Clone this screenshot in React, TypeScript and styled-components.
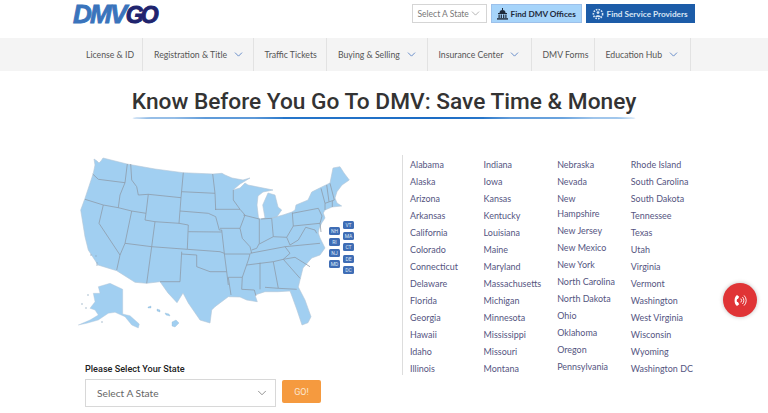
import styled, { createGlobalStyle } from "styled-components";
import { ChevronDown } from "lucide-react";

const GlobalStyle = createGlobalStyle`
  html, body {
    margin: 0;
    padding: 0;
    height: 413px;
    overflow: hidden;
    background: #fff;
    font-family: "Lato", "Liberation Sans", sans-serif;
  }
  * { box-sizing: border-box; }
`;

const Page = styled.div`
  position: relative;
  width: 768px;
  height: 413px;
  overflow: hidden;
`;

const TopBar = styled.header`
  height: 38px;
  padding: 4px 73px 0;
  display: flex;
  align-items: flex-start;
`;

const Logo = styled.div`
  font-family: "Liberation Sans", sans-serif;
  font-size: 26px;
  line-height: 21px;
  font-weight: 700;
  font-style: italic;
  letter-spacing: -1.7px;
  color: #3a74bc;
  -webkit-text-stroke: 0.9px currentColor;
  margin-right: auto;
`;

const LogoGo = styled.span`
  color: #20246e;
  font-size: 23px;
  letter-spacing: -2.8px;
`;

const TopSelect = styled.div`
  width: 75px;
  height: 19px;
  margin-right: 4px;
  padding: 0 4px 0 5px;
  display: flex;
  align-items: center;
  justify-content: space-between;
  border: 1px solid #d5d5d5;
  background: #fff;
  color: #777;
  font-size: 8.5px;
  white-space: nowrap;
  svg { flex-shrink: 0; }
`;

const TopButton = styled.div<{ $dark?: boolean }>`
  width: ${(p) => (p.$dark ? "109.5px" : "91px")};
  height: 19px;
  margin-left: ${(p) => (p.$dark ? "4px" : "0")};
  padding: 0 5px;
  display: flex;
  align-items: center;
  gap: 3px;
  font-size: 8.2px;
  font-weight: 700;
  white-space: nowrap;
  border: 1px solid ${(p) => (p.$dark ? "#1c5ca8" : "#9cc0ea")};
  background: ${(p) => (p.$dark ? "#1c5ca8" : "#a6d4fa")};
  color: ${(p) => (p.$dark ? "#d8e6f5" : "#1e2a3a")};
  svg { flex-shrink: 0; }
`;

const NavBar = styled.nav`
  height: 33px;
  background: #f4f4f4;
  padding-left: 75px;
  display: flex;
`;

const NavItem = styled.div<{ $width: number }>`
  width: ${(p) => p.$width}px;
  padding-left: 11px;
  display: flex;
  align-items: center;
  gap: 5px;
  border-right: 1px solid #e2e2e2;
  color: #555;
  font-size: 8.7px;
  white-space: nowrap;
  svg { color: #4a78c0; flex-shrink: 0; }
`;

const TitleRow = styled.div`
  display: flex;
  justify-content: center;
  padding-top: 15px;
`;

const Title = styled.h1`
  margin: 0;
  font-family: "Roboto", sans-serif;
  font-size: 22.7px;
  line-height: 31px;
  font-weight: 500;
  color: #333;
  white-space: nowrap;
  &::after {
    content: "";
    display: block;
    height: 2px;
    border-radius: 50%;
    background: linear-gradient(90deg, #2f7fd0, #1c6cc4 60%, #4a94dc);
  }
`;

const Main = styled.main`
  display: flex;
  padding-top: 36px;
`;

const LeftColumn = styled.section`
  width: 402px;
  padding-left: 78px;
`;

const MapWrap = styled.div`
  position: relative;
  width: 280px;
  height: 175px;
`;

const TagCluster = styled.div`
  position: absolute;
  left: 251px;
  top: 66px;
  display: flex;
  gap: 3px;
`;

const TagColumn = styled.div<{ $offset: number }>`
  display: flex;
  flex-direction: column;
  gap: 3.2px;
  padding-top: ${(p) => p.$offset}px;
`;

const Tag = styled.div`
  width: 11px;
  height: 8px;
  border-radius: 1.5px;
  background: #3f6db5;
  color: #dce8f6;
  font-family: "Roboto", sans-serif;
  font-size: 5px;
  line-height: 8px;
  text-align: center;
`;

const PickerLabel = styled.div`
  margin: 32px 0 0 7px;
  font-family: "Roboto", sans-serif;
  font-size: 9.1px;
  line-height: 14px;
  font-weight: 500;
  color: #222;
`;

const PickerRow = styled.div`
  display: flex;
  gap: 6px;
  margin: 3px 0 0 7px;
`;

const PickerSelect = styled.div`
  width: 191px;
  height: 28px;
  padding: 0 6px 0 11px;
  display: flex;
  align-items: center;
  justify-content: space-between;
  border: 1px solid #d8d8d8;
  color: #666;
  font-size: 10.2px;
`;

const GoButton = styled.div`
  width: 39px;
  height: 23px;
  margin-top: 1px;
  border-radius: 2px;
  background: #f59a3f;
  color: #fbe6d0;
  font-family: "Roboto", sans-serif;
  font-size: 9px;
  line-height: 24px;
  text-align: center;
`;

const StateList = styled.section`
  height: 220px;
  padding: 1px 0 0 7px;
  border-left: 1px solid #ddd;
  display: flex;
`;

const StateColumn = styled.ul<{ $narrow?: boolean }>`
  width: 73.6px;
  margin: 0;
  padding: 0 ${(p) => (p.$narrow ? "15px" : "0")} 0 0;
  list-style: none;
`;

const StateItem = styled.li`
  padding: 1px 0;
  color: #55557f;
  font-size: 8.95px;
  line-height: 15px;
`;

const CallButton = styled.div`
  position: absolute;
  left: 723px;
  top: 283px;
  width: 34px;
  height: 34px;
  border-radius: 50%;
  background: #e03436;
  box-shadow: 0 0 4px rgba(0, 0, 0, 0.25);
  display: flex;
  align-items: center;
  justify-content: center;
`;

const navItems = [
  { label: "License & ID", width: 68 },
  { label: "Registration & Title", width: 110.5, arrow: true },
  { label: "Traffic Tickets", width: 73.5 },
  { label: "Buying & Selling", width: 100.5, arrow: true },
  { label: "Insurance Center", width: 104, arrow: true },
  { label: "DMV Forms", width: 63 },
  { label: "Education Hub", width: 96, arrow: true },
];

const stateColumns = [
  ["Alabama", "Alaska", "Arizona", "Arkansas", "California", "Colorado", "Connecticut", "Delaware", "Florida", "Georgia", "Hawaii", "Idaho", "Illinois"],
  ["Indiana", "Iowa", "Kansas", "Kentucky", "Louisiana", "Maine", "Maryland", "Massachusetts", "Michigan", "Minnesota", "Mississippi", "Missouri", "Montana"],
  ["Nebraska", "Nevada", "New Hampshire", "New Jersey", "New Mexico", "New York", "North Carolina", "North Dakota", "Ohio", "Oklahoma", "Oregon", "Pennsylvania"],
  ["Rhode Island", "South Carolina", "South Dakota", "Tennessee", "Texas", "Utah", "Virginia", "Vermont", "Washington", "West Virginia", "Wisconsin", "Wyoming", "Washington DC"],
];

// map coords are page pixels, the viewBox shifts them into the map box
const mainland =
  "M94 159 L97 161 L99 163 L101 161 L103 158 L127 164 L155 169 L183 172.7 L213 174 L222 173.3 L225 175 L232 178 L243 180 L250 178 L240 184 L233 190 L240 188 L245 183 L248 185 L258 187 L273 190 L263 192 L258 196 L257 205 L258.5 218 L261 219 L265 218 L262.7 205 L268 193 L275 195 L278 207 L281.7 210 L277 216.7 L272 218 L283 215 L292 212 L295 210 L296 205 L308 200 L311.7 192 L321.7 187 L330 183 L333 168 L340 166.7 L344 173 L349.3 180 L342 185 L337 191.7 L335 198 L337 203 L341.7 206 L332 207 L325 210 L323.3 213 L325 218 L321.7 223 L319 229 L318.3 233 L320 238 L325 248 L320 255 L311.7 258 L303 268 L300 280 L298.3 287 L305 300 L311 316.7 L308 322.7 L302 325 L297 310 L292.3 297 L290 291 L278.3 291.7 L265 291.7 L255 295 L257.3 301.7 L246.7 300 L240 297 L228.3 296.7 L215 306.7 L211.7 310 L210 323 L200 320 L188.3 303 L183 293 L177 302.7 L168 293 L160 281.7 L146.7 283.3 L135 282.3 L116.7 270.7 L98 265 L88.3 250 L85 236.7 L80.7 210 L85 198.3 L93.3 173.3 L95 165 Z";

const borders = [
  // northwest
  "M92.7 174 L98.3 179.3 L125 182.7",
  "M127.3 164 L125 182.7 L120 195 L118.3 207.7",
  "M85 199.3 L103.3 205 L118.3 207.7 L131.7 211 L146 213.3",
  "M103.3 205 L99 223.3 L120 255 L116.7 270",
  "M131.7 211 L125 243.3 L120 255",
  "M130.7 164 L131.7 180 L136.7 186.7 L138.3 195 L148.3 194.3 L181 197.7",
  "M148.3 194.3 L146 213.3 L145 220 L155 221.7 L179 223.3",
  "M155 221.7 L151.7 246.7 L146.7 283.3",
  "M125 243.3 L151.7 246.7 L187.3 249.3 L220 251.7 L224.3 253.3",
  // plains
  "M183.3 172.7 L181 197.7 L179 223.3",
  "M181.7 191.7 L215 193.3",
  "M180 211 L208.3 213.3 L215.7 216.7 L219.3 230 L221.7 230 L224.3 253.3 L226.7 271.7 L228.3 285",
  "M212.7 174 L215 193.3 L215.7 210",
  "M179 223.3 L188.3 225 L187.3 249.3",
  "M188.3 231.7 L221.7 232",
  "M181.7 251.7 L180 281.7 L160 281.7",
  "M181.7 254 L196.7 255 L196.7 266.7 L210 271.7 L226.7 271.7",
  // midwest
  "M215 209.3 L240 209.3 L233.3 200 L233.3 190",
  "M240 209.3 L245 215 L240 228.3 L242.3 238.3 L250 246.7 L251.7 253.3",
  "M220 228.3 L240 228.3",
  "M243.3 215 L259.3 219 L259.3 243.3 L256.7 248.3 L251.7 250",
  "M261 219 L271.7 218.3 L273.3 236.7 L259.3 244",
  "M273.3 236.7 L286.7 237.3 L293.3 226 L292.3 212.5",
  // south
  "M224.3 254 L250 254 L248.3 260 L242.3 277.3 L228.3 277.3 L231 295",
  "M242.3 277.3 L241.7 289.3 L254.3 290 L256 296",
  "M250 253.3 L285 246.7 L320 243.3",
  "M246.7 265 L273.3 261.7 L283.3 259.3 L295 257.3 L310 266.7",
  "M283.3 259.3 L290 253.3 L285 246.7",
  "M286.7 237.3 L290 245 L298.3 240 L305.7 227.3 L315 230 L316.7 233.3",
  "M260 262.7 L260 289.3",
  "M273.3 261.7 L278.3 288.3",
  "M283.3 259.3 L300 278.3",
  "M265 287.3 L278.3 288.3 L296.7 289.3",
  // northeast
  "M292.3 213.3 L318.3 208.3 L322 216 L320 223.3 L293.3 226",
  "M321 188.3 L325 203.3 L325 210",
  "M326.7 185 L329 201.7",
  "M330 183.3 L334.3 200",
  "M325 203.3 L334.3 200",
  "M332.3 201 L332.3 207",
  "M320 223.3 L321 232",
];

const alaska =
  "M98.3 286.7 L110 283.3 L122.7 289.3 L122.7 314 L130 315.7 L139.3 324 L138.3 328 L131.7 325 L125 316.7 L115 312.3 L108.3 313.3 L98.3 320 L86.7 323.3 L78.3 325 L90 320 L98.3 315 L95 310 L90 308.3 L95 301.7 L93.3 293.3 L100 293.3 Z";

const islands = [
  "M172 322 L176 320 L179 323 L175 327 L172 326 Z",
  "M165 313 L169 314 L170 316 L166 315 Z",
  "M157 309 L160 310 L160 312 L157 311 Z",
  "M148 307 L151 306 L151 308 L148 308 Z",
];

const specks = [
  [91, 255], [96, 256], [97, 263], [97, 265], [88, 295], [82, 304], [86, 308], [102, 322],
];

function USMap() {
  return (
    <svg width="280" height="175" viewBox="78 155 280 175">
      <path d={mainland} fill="#a1cff1" stroke="#b4c6d6" strokeWidth="0.6" strokeLinejoin="round" />
      {borders.map((d) => (
        <path key={d} d={d} fill="none" stroke="#8c98a6" strokeWidth="0.75" strokeLinejoin="round" />
      ))}
      <path d={alaska} fill="#a1cff1" stroke="#b4c6d6" strokeWidth="0.4" />
      {islands.map((d) => (
        <path key={d} d={d} fill="#a1cff1" stroke="#8fb4d0" strokeWidth="0.3" />
      ))}
      {specks.map(([x, y]) => (
        <circle key={`${x}-${y}`} cx={x} cy={y} r="0.7" fill="#8fa9bf" />
      ))}
    </svg>
  );
}

function OfficeIcon() {
  return (
    <svg width="11" height="12" viewBox="0 0 11 12" fill="#1e2a3a">
      <rect x="5" y="0" width="1" height="2" />
      <path d="M2.5 5 A3 3 0 0 1 8.5 5 Z" />
      <rect x="1" y="5" width="9" height="1" />
      <rect x="1.5" y="6.5" width="1.2" height="3.5" />
      <rect x="3.7" y="6.5" width="1.2" height="3.5" />
      <rect x="6.1" y="6.5" width="1.2" height="3.5" />
      <rect x="8.3" y="6.5" width="1.2" height="3.5" />
      <rect x="0" y="10.2" width="11" height="1.4" />
    </svg>
  );
}

function ProvidersIcon() {
  return (
    <svg width="12" height="12" viewBox="0 0 12 12" fill="none">
      <circle cx="6" cy="6" r="4.6" stroke="#d8e6f5" strokeWidth="1.6" strokeDasharray="1.6 1.1" />
      <circle cx="6" cy="4.6" r="1.4" fill="#d8e6f5" />
      <path d="M3.2 9 C3.4 6.8 8.6 6.8 8.8 9 Z" fill="#d8e6f5" />
    </svg>
  );
}

function CallIcon() {
  return (
    <svg width="14" height="13" viewBox="0 0 14 13" fill="none" stroke="#fff">
      <path
        d="M4 1 C0.8 3 0.8 10 4 12 L6.2 10.2 L4.9 7.9 L4.2 8.1 C3.6 7 3.6 6 4.2 4.9 L4.9 5.1 L6.2 2.8 Z"
        fill="#fff"
        stroke="none"
      />
      <path d="M7.8 4.6 A2.8 2.8 0 0 1 7.8 8.4" strokeWidth="0.9" />
      <path d="M9.4 3 A5 5 0 0 1 9.4 10" strokeWidth="0.9" />
      <path d="M11 1.4 A7 7 0 0 1 11 11.6" strokeWidth="0.9" />
    </svg>
  );
}

function App() {
  return (
    <Page>
      <GlobalStyle />
      <TopBar>
        <Logo>
          DMV<LogoGo>GO</LogoGo>
        </Logo>
        <TopSelect>
          Select A State
          <ChevronDown size={13} strokeWidth={1} />
        </TopSelect>
        <TopButton>
          <OfficeIcon />
          Find DMV Offices
        </TopButton>
        <TopButton $dark>
          <ProvidersIcon />
          Find Service Providers
        </TopButton>
      </TopBar>
      <NavBar>
        {navItems.map((item) => (
          <NavItem key={item.label} $width={item.width}>
            {item.label}
            {item.arrow && <ChevronDown size={13} strokeWidth={1.5} />}
          </NavItem>
        ))}
      </NavBar>
      <TitleRow>
        <Title>Know Before You Go To DMV: Save Time &amp; Money</Title>
      </TitleRow>
      <Main>
        <LeftColumn>
          <MapWrap>
            <USMap />
            <TagCluster>
              <TagColumn $offset={5.6}>
                {["NH", "RI", "NJ", "MD"].map((t) => (
                  <Tag key={t}>{t}</Tag>
                ))}
              </TagColumn>
              <TagColumn $offset={0}>
                {["VT", "MA", "CT", "DE", "DC"].map((t) => (
                  <Tag key={t}>{t}</Tag>
                ))}
              </TagColumn>
            </TagCluster>
          </MapWrap>
          <PickerLabel>Please Select Your State</PickerLabel>
          <PickerRow>
            <PickerSelect>
              Select A State
              <ChevronDown size={14} strokeWidth={1.2} />
            </PickerSelect>
            <GoButton>GO!</GoButton>
          </PickerRow>
        </LeftColumn>
        <StateList>
          {stateColumns.map((col, i) => (
            <StateColumn key={col[0]} $narrow={i === 2}>
              {col.map((name) => (
                <StateItem key={name}>{name}</StateItem>
              ))}
            </StateColumn>
          ))}
        </StateList>
      </Main>
      <CallButton>
        <CallIcon />
      </CallButton>
    </Page>
  );
}

export default App;
